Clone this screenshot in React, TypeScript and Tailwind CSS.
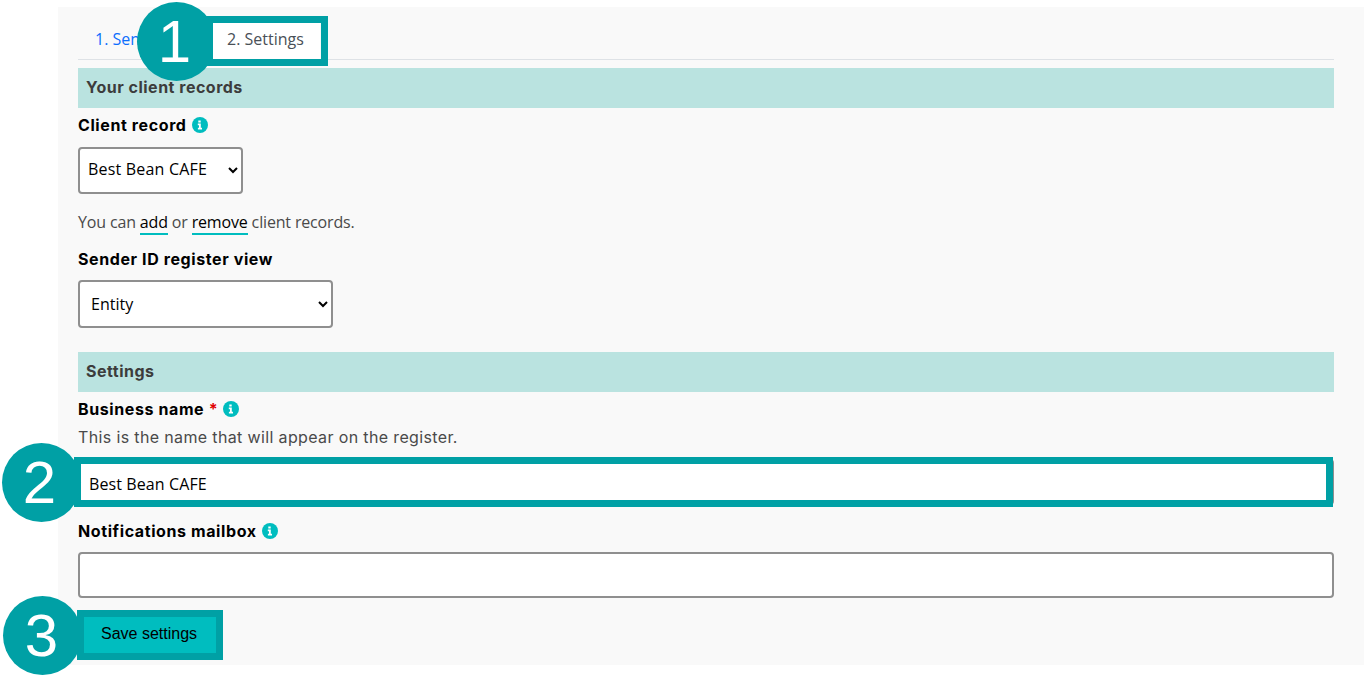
function InfoIcon() {
  return (
    <svg width="16" height="16" viewBox="0 0 16 16" className="inline-block shrink-0">
      <circle cx="8" cy="8" r="8" fill="#00bdbf" />
      <path d="M6.3 3.4h2.4v2H6.3zM5.8 6.6h3v4.2h1.2v1.6H5.9v-1.6h1.1V8.2H5.8z" fill="#fff" />
    </svg>
  )
}

function Marker({ n, className }: { n: number; className: string }) {
  return (
    <div
      className={`absolute z-20 flex h-[79px] w-[79px] items-center justify-center rounded-full bg-[#00a0a5] font-['Liberation_Sans',Arial,sans-serif] text-[60px] leading-none text-white ${className}`}
    >
      {n}
    </div>
  )
}

function Highlight({ className }: { className: string }) {
  return <div className={`pointer-events-none absolute z-10 border-[7px] border-[#00a0a5] ${className}`} />
}

function Label({ children }: { children: React.ReactNode }) {
  return (
    <div className="flex items-center gap-[5px] font-['Inter',sans-serif] text-base font-bold leading-5 tracking-[0.6px] text-black">
      {children}
    </div>
  )
}

function SectionHeader({ children }: { children: React.ReactNode }) {
  return (
    <div className="flex h-10 items-center bg-[#bae3e0] px-2 pb-[2px] font-['Inter',sans-serif] text-base font-bold tracking-[0.5px] text-[#3c3c3c]">
      {children}
    </div>
  )
}

const field = 'rounded-[4px] border-2 border-[#8f8f8f] bg-white text-base text-black'

export default function App() {
  return (
    <div className="relative h-[677px] overflow-hidden bg-white pl-[58px] pt-[7px] font-['Open_Sans',sans-serif]">
      <div className="h-[658px] bg-[#f9f9f9] pl-5 pr-[30px]">
        {/* Tabs */}
        <div className="flex h-[53px] items-end border-b border-[#dee2e6]">
          <div className="relative flex h-[36px] items-center pb-1 pl-[17px] text-base text-[#0d6efd]">
            <span className="w-[116px] whitespace-nowrap">1. Sender IDs</span>
          </div>
          <div className="relative z-30 flex h-[36px] items-center bg-white px-4 pb-1 text-base text-[#495057]">
            2. Settings
            <Highlight className="-bottom-[7px] -left-[5px] -right-[8px] -top-[7px]" />
          </div>
        </div>

        <div className="mt-2">
          <SectionHeader>Your client records</SectionHeader>
        </div>

        <div className="mt-[7px]">
          <Label>
            Client record <InfoIcon />
          </Label>
        </div>
        <select className={`${field} mt-3 block h-[47px] w-[165px] pb-1 pl-1 tracking-[0.2px]`} defaultValue="best">
          <option value="best">Best Bean CAFE</option>
        </select>

        <p className="mt-[17px] text-base leading-[22px] tracking-[-0.16px] text-[#4a4a4a]">
          You can <a className="border-b-2 border-[#00bdbf] text-black">add</a> or{' '}
          <a className="border-b-2 border-[#00bdbf] text-black">remove</a> client records.
        </p>

        <div className="mt-4">
          <Label>Sender ID register view</Label>
        </div>
        <select className={`${field} mt-[11px] block h-[48px] w-[255px] px-[7px]`} defaultValue="entity">
          <option value="entity">Entity</option>
        </select>

        <div className="mt-6">
          <SectionHeader>Settings</SectionHeader>
        </div>

        <div className="mt-[7px]">
          <Label>
            <span>
              Business name <span className="text-[#e00000]">*</span>
            </span>
            <InfoIcon />
          </Label>
        </div>
        <p className="mt-[8px] font-['Inter',sans-serif] text-base leading-5 tracking-[0.36px] text-[#4a4a4a]">
          This is the name that will appear on the register.
        </p>

        <div className="relative mt-[12px]">
          <input className={`${field} block h-[46px] w-full pl-[9px] pr-[10px] pt-1 tracking-[0.1px]`} defaultValue="Best Bean CAFE" />
          <Highlight className="-left-1 right-px -top-[2px] -bottom-[2px]" />
        </div>

        <div className="mt-4">
          <Label>
            Notifications mailbox <InfoIcon />
          </Label>
        </div>
        <input className={`${field} mt-[11px] block h-[46px] w-full px-[10px]`} />

        <button className="relative mt-[12px] -ml-px flex h-[50px] w-[146px] items-center justify-center bg-[#00bdbf] pb-[2px] pr-[2px] font-['Liberation_Sans',Arial,sans-serif] text-base text-black">
          Save settings
          <Highlight className="inset-0" />
        </button>
      </div>

      <Marker n={1} className="left-[137px] top-[2px] pr-[4px]" />
      <Marker n={2} className="left-[2px] top-[443px] pr-1" />
      <Marker n={3} className="left-[3px] top-[596px] pr-[2px]" />
    </div>
  )
}
